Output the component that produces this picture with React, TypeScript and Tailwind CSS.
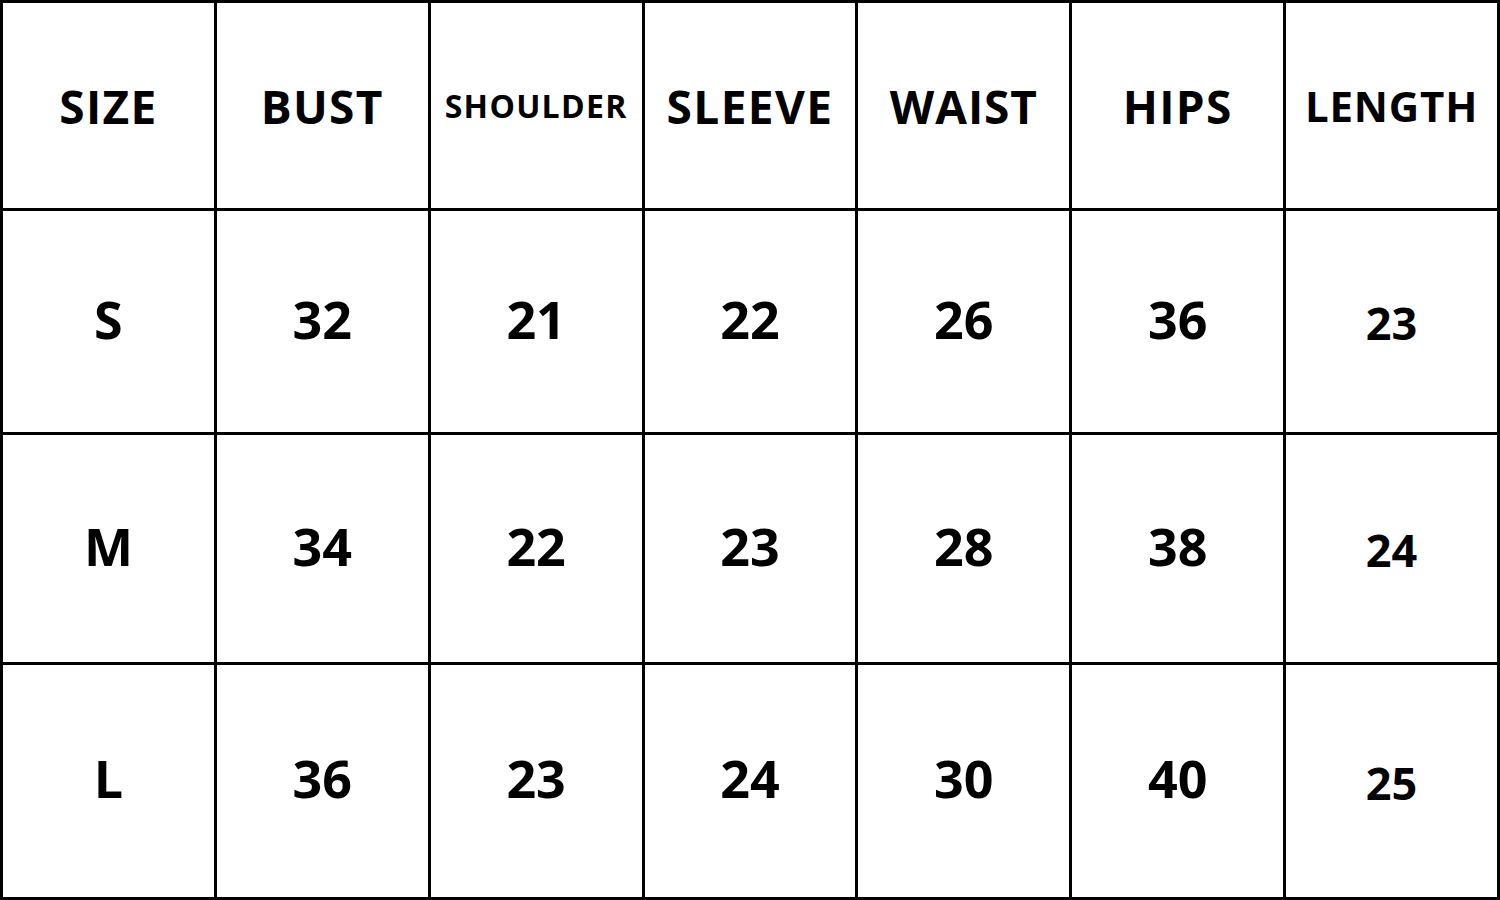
const headers = [
  { label: 'SIZE', cls: 'text-[46px] tracking-[0.03em]' },
  { label: 'BUST', cls: 'text-[46px] tracking-[0.03em]' },
  { label: 'SHOULDER', cls: 'text-[32px] tracking-[0.04em]' },
  { label: 'SLEEVE', cls: 'text-[46px] tracking-[0.03em]' },
  { label: 'WAIST', cls: 'text-[46px] tracking-[0.02em]' },
  { label: 'HIPS', cls: 'text-[46px] tracking-[0.03em]' },
  { label: 'LENGTH', cls: 'text-[42px] tracking-[0.02em]' },
];

const rows = [
  { size: 'S', values: ['32', '21', '22', '26', '36', '23'] },
  { size: 'M', values: ['34', '22', '23', '28', '38', '24'] },
  { size: 'L', values: ['36', '23', '24', '30', '40', '25'] },
];

export default function App() {
  return (
    <div
      className="w-[1500px] h-[900px] bg-black p-[3px] grid grid-cols-7 grid-rows-[205fr_221fr_227fr_232fr] gap-[3px] text-black font-bold"
      style={{ fontFamily: '"Open Sans", "Noto Sans", sans-serif' }}
    >
      {headers.map((h) => (
        <div key={h.label} className="bg-white flex items-center justify-center">
          <span className={`${h.cls} leading-none`}>{h.label}</span>
        </div>
      ))}
      {rows.map((r) => (
        <>
          <div key={r.size} className="bg-white flex items-center justify-center pb-[6px]">
            <span className="text-[52px] leading-none">{r.size}</span>
          </div>
          {r.values.map((v, i) =>
            i === 5 ? (
              <div key={r.size + i} className="bg-white flex items-center justify-center pt-[2px]">
                <span className="text-[45px] leading-none">{v}</span>
              </div>
            ) : (
              <div key={r.size + i} className="bg-white flex items-center justify-center pb-[6px]">
                <span className="text-[52px] leading-none">{v}</span>
              </div>
            )
          )}
        </>
      ))}
    </div>
  );
}
